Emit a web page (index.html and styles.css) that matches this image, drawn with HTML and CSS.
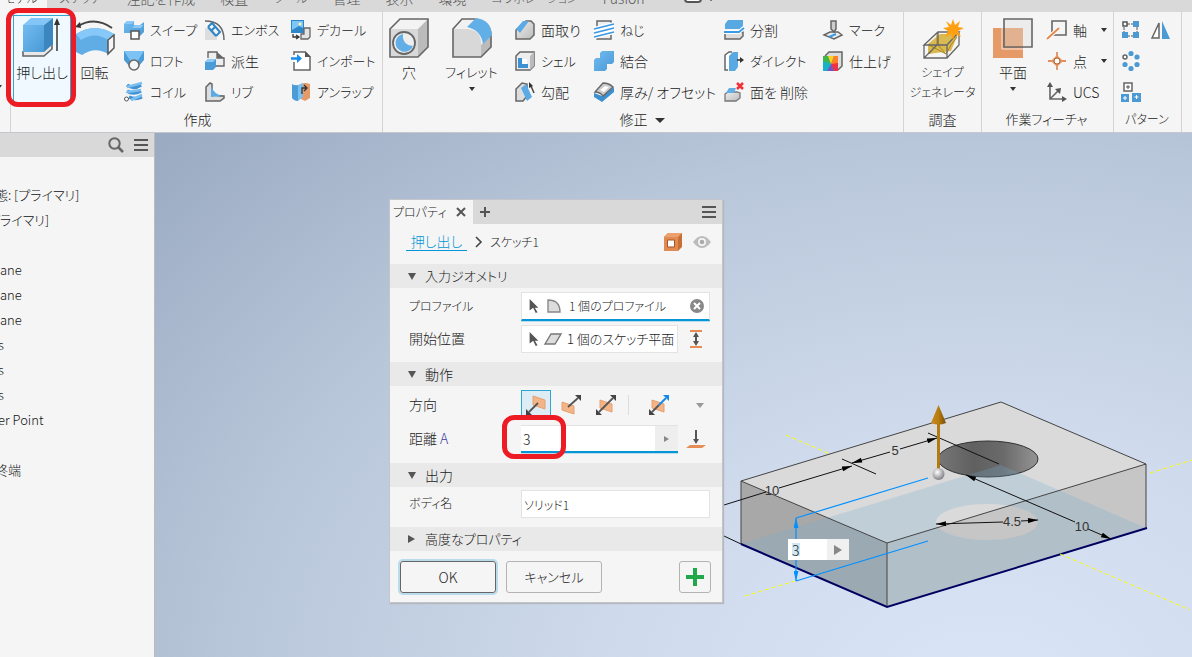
FILE: index.html
```
<!DOCTYPE html>
<html lang="ja">
<head>
<meta charset="utf-8">
<title>押し出し</title>
<link rel="stylesheet" href="styles.css">
</head>
<body>
<svg class="defs" aria-hidden="true">
  <defs>
    <linearGradient id="blue" x1="0" y1="0" x2="1" y2="1"><stop offset="0" stop-color="#72bbf0"/><stop offset="1" stop-color="#4a9ad6"/></linearGradient>
    <linearGradient id="grey" x1="0" y1="0" x2="1" y2="1"><stop offset="0" stop-color="#eee"/><stop offset="1" stop-color="#bbb"/></linearGradient>
    <linearGradient id="hole" x1="0" y1="0" x2="1" y2="0"><stop offset="0" stop-color="#777"/><stop offset=".35" stop-color="#606060"/><stop offset=".65" stop-color="#6a6a6a"/><stop offset="1" stop-color="#949494"/></linearGradient>
    <linearGradient id="gold" x1="0" y1="0" x2="1" y2="0"><stop offset="0" stop-color="#c98a1c"/><stop offset=".5" stop-color="#b87c10"/><stop offset="1" stop-color="#7a4d00"/></linearGradient>
    <radialGradient id="ball" cx=".4" cy=".35" r=".7"><stop offset="0" stop-color="#fff"/><stop offset="1" stop-color="#77777c"/></radialGradient>
    <marker id="tip" viewBox="0 0 12 6" refX="12" refY="3" markerWidth="12" markerHeight="5" markerUnits="userSpaceOnUse" orient="auto-start-reverse"><path d="M0 0 12 3 0 6z" fill="#000"/></marker>
    <marker id="tip-blue" viewBox="0 0 12 6" refX="12" refY="3" markerWidth="12" markerHeight="5" markerUnits="userSpaceOnUse" orient="auto-start-reverse"><path d="M0 0 12 3 0 6z" fill="#0090ff"/></marker>
  </defs>
</svg>
<div class="app">
  <nav class="tabs">
    <button class="tab tab-active narrow">モデル</button>
    <button class="tab narrow">スケッチ</button>
    <button class="tab">注記を作成</button>
    <button class="tab">検査</button>
    <button class="tab narrow">ツール</button>
    <button class="tab">管理</button>
    <button class="tab">表示</button>
    <button class="tab">環境</button>
    <button class="tab narrow">コラボレーション</button>
    <button class="tab">Fusion</button>
    <button class="tab tab-icon" aria-label="表示切替"><svg width="32" height="20" viewBox="0 0 32 20"><rect x="1" y="0" width="16" height="13" rx="3" fill="#fff" stroke="#555" stroke-width="2"/><path d="M5 10h8L9 6z" fill="#333"/><path d="M23 8h8l-4 4z" fill="#222"/></svg></button>
  </nav>

  <div class="ribbon">
    <div class="ribbon-edge"><span class="caret"></span></div>

    <section class="group group-create">
      <div class="group-body">
        <button class="big big-selected">
          <svg width="40" height="40" viewBox="0 0 40 40"><path d="M1 33v5h21l8-7v-5" fill="#e8e8e8" stroke="#666" stroke-width="1.600"/><path d="M1 7h21v27H1z" fill="url(#blue)"/><path d="M1 7 9 0h22l-9 7z" fill="#83c5f7"/><path d="M22 7l9-7v26l-9 8z" fill="#3c86bf"/><path d="M35 33V5" stroke="#333" stroke-width="1.500"/><path d="M35 0l-3 7h6z" fill="#333"/></svg>
          <span>押し出し</span>
          <i class="callout callout-tool"></i>
        </button>
        <button class="big big-revolve">
          <svg width="40" height="40" viewBox="0 0 40 40"><path d="M1 16Q20 4 39 16L33 36Q20 28 7 37L1 34z" fill="#60ade6"/><path d="M1 16Q20 4 39 16L33 22Q20 13 6 22z" fill="#86c8f8"/><path d="M33 22l6-5v13l-6 6z" fill="#f5f5f5" stroke="#555" stroke-width="1.500"/><path d="M3 8Q20-2 37 10" fill="none" stroke="#444" stroke-width="2"/><path d="M0 9 5 4l1 6z" fill="#333"/></svg>
          <span>回転</span>
        </button>
        <div class="col col-create-a">
          <button class="tool"><svg width="20" height="20" viewBox="0 0 20 20"><path d="M0 4 3 1h7v4h6l4-3v10l-4 4H7v-3H0z" fill="url(#blue)"/><path d="M0 4 3 1h7L8 4zM8 8l3-3h8l-2 3z" fill="#8bcaf8"/><rect x="7" y="11" width="8" height="8" fill="#fff" stroke="#555" stroke-width="1.500"/></svg><span class="kana">スイープ</span></button>
          <button class="tool"><svg width="20" height="20" viewBox="0 0 20 20"><path d="M0 0h20v9l-6 7H6L0 9z" fill="#4b9bd7"/><path d="M0 0h20l-7 11H7z" fill="#7cc2f4"/><circle cx="10" cy="14" r="5" fill="#f5f5f5" stroke="#666" stroke-width="1.500"/></svg><span class="kana">ロフト</span></button>
          <button class="tool"><svg width="20" height="20" viewBox="0 0 20 20"><path d="M3 3q6 5 14 0M3 9q6 4 14 0M5 15q6 3 13 0" fill="none" stroke="#4292d0" stroke-width="3.500"/><path d="M18 1 3 5M17 8 3 10M18 13 7 18" stroke="#7abff1" stroke-width="2.500"/><circle cx="2.500" cy="17" r="2" fill="#fff" stroke="#555"/></svg><span class="kana">コイル</span></button>
        </div>
        <div class="col col-create-b">
          <button class="tool"><svg width="20" height="20" viewBox="0 0 20 20"><path d="M0 8q12 0 12 12H0z" fill="#ddd"/><path d="M0 1q19 0 19 19" fill="none" stroke="#666" stroke-width="1.500"/><path d="M3 7l4-4 8 9-4 4M7 10l3-3M3 7l8 9" fill="none" stroke="#2d86c8" stroke-width="2"/></svg><span class="kana">エンボス</span></button>
          <button class="tool"><svg width="20" height="20" viewBox="0 0 20 20"><path d="M3 7V1h9v6h7v8h-8" fill="#eee" stroke="#666" stroke-width="1.400"/><path d="M12 1v6h7z" fill="#666"/><path d="M0 11l3-3h8v8l-3 3H0z" fill="#4b9bd7"/><path d="M0 11l3-3h8l-3 3z" fill="#8bcaf8"/></svg><span>派生</span></button>
          <button class="tool"><svg width="20" height="20" viewBox="0 0 20 20"><path d="M1 19V5l4-4 2 1v10q4 2 12 2v2l-4 3z" fill="#ddd" stroke="#666" stroke-width="1.500"/><path d="M6 4q3 8 11 10L6 15z" fill="#5aaae5"/></svg><span class="kana">リブ</span></button>
        </div>
        <div class="col col-create-c">
          <button class="tool"><svg width="20" height="20" viewBox="0 0 20 20"><path d="M0 0h13v13H0z" fill="#2d86c8"/><path d="M1 1h11v7L8 6 1 10z" fill="#7cc6f8"/><circle cx="9" cy="4" r="1.500" fill="#fff79a"/><path d="M13 8h6v9l-2 2h-7v-5h3z" fill="#e3e3e3" stroke="#666" stroke-width="1.300"/><path d="M2 14v3h5M5 15l3 2-3 2" fill="none" stroke="#333" stroke-width="1.300"/></svg><span class="kana">デカール</span></button>
          <button class="tool"><svg width="20" height="20" viewBox="0 0 20 20"><path d="M3 4V1h11l5 5v13H3v-8" fill="#fff" stroke="#666" stroke-width="1.500"/><path d="M14 0v6h6z" fill="#555"/><path d="M0 7.500h7" stroke="#1b8ce8" stroke-width="2.500"/><path d="M6 3l5 4.500L6 12z" fill="#1b8ce8"/></svg><span class="kana">インポート</span></button>
          <button class="tool"><svg width="20" height="20" viewBox="0 0 20 20"><path d="M10 2q4-2 9 0v14l-5 3-4-2z" fill="#e59a68"/><path d="M1 2q3 2 6 1v16q-4 0-6-3z" fill="#4b9bd7"/><path d="M7 3l5-2v14l-5 4z" fill="#78bff1"/><path d="M11 12V6h5M13 3l3 3-3 3" fill="none" stroke="#333" stroke-width="1.300"/></svg><span class="kana">アンラップ</span></button>
        </div>
      </div>
      <h2 class="group-title">作成</h2>
    </section>

    <section class="group group-modify">
      <div class="group-body">
        <button class="big big-hole">
          <svg width="40" height="40" viewBox="0 0 40 40"><path d="M1 11 11 1h28v28L29 39H1z" fill="#f3f3f3"/><path d="M1 11h28v28H1z" fill="#d9d9d9"/><path d="M29 11 39 1v28L29 39z" fill="#bbb"/><path d="M1 11 11 1h28v28L29 39H1z" fill="none" stroke="#666" stroke-width="1.600"/><circle cx="15" cy="25" r="11" fill="#eee" stroke="#666" stroke-width="1.800"/><path d="M14 16a9 9 0 1 0 10 12Q13 27 14 16z" fill="#62aee6"/></svg>
          <span>穴</span>
        </button>
        <button class="big big-fillet">
          <svg width="40" height="40" viewBox="0 0 40 40"><path d="M1 11 10 1h12q17 2 17 17v11L29 39H1z" fill="#f1f1f1"/><path d="M1 11h14q14 1 14 14v14H1z" fill="#d8d8d8"/><path d="M29 27l10-10v12L29 39z" fill="#bbb"/><path d="M1 11 10 1h12q17 2 17 17v11L29 39H1z" fill="none" stroke="#666" stroke-width="1.600"/><path d="M15 9 24 0q15 2 16 17l-9 9Q29 12 15 9z" fill="#62aee6"/></svg>
          <span class="kana">フィレット</span>
          <span class="caret"></span>
        </button>
        <div class="col col-modify-a">
          <button class="tool"><svg width="20" height="20" viewBox="0 0 20 20"><path d="M1 10 11 1h5l3 3v11l-4 4H1z" fill="url(#grey)" stroke="#666" stroke-width="1.500"/><path d="M1 9 8 1h6L5 13z" fill="#5aaae5"/></svg><span>面取り</span></button>
          <button class="tool"><svg width="20" height="20" viewBox="0 0 20 20"><path d="M1 5l4-4h14v14l-4 4H1z" fill="#eee" stroke="#666" stroke-width="1.500"/><path d="M15 5l4-4v14l-4 4z" fill="#bbb"/><path d="M4 8h8v8H4z" fill="#fff"/><path d="M3 7h4v6h6v4H3z" fill="#3c91d2"/></svg><span class="kana">シェル</span></button>
          <button class="tool"><svg width="20" height="20" viewBox="0 0 20 20"><path d="M1 19V7l6-6 5 1v12l-4 5z" fill="#ddd" stroke="#666" stroke-width="1.500"/><path d="M6 6l5-4 6 13-5 4z" fill="#5aaae5"/><path d="M19 11 16 4" stroke="#444" stroke-width="1.500"/><path d="M14 0l4 4-4 2z" fill="#333"/></svg><span>勾配</span></button>
        </div>
        <div class="col col-modify-b">
          <button class="tool"><svg width="20" height="20" viewBox="0 0 20 20"><path d="M3 1h14v18H3z" fill="#eee" stroke="#666" stroke-width="1.500"/><path d="M0 9 20 4M0 13 20 8M0 17l20-5" stroke="#fff" stroke-width="4"/><path d="M0 9 20 4M0 13 20 8M0 17l20-5" stroke="#3a98e3" stroke-width="1.800"/></svg><span class="kana">ねじ</span></button>
          <button class="tool"><svg width="20" height="20" viewBox="0 0 20 20"><path d="M0 9l2-2h4V2l2-2h12v11l-2 2h-5v5l-2 2H0z" fill="url(#blue)"/></svg><span>結合</span></button>
          <button class="tool"><svg width="20" height="20" viewBox="0 0 20 20"><path d="M0 11v4l8 5 12-10V5L8 14z" fill="#3c8fd0"/><path d="M1 10 9 1q6 0 10 4L9 14q-3-4-8-4z" fill="#ccc" stroke="#666" stroke-width="1.300"/><path d="M6 8l5-4 4 1-5 5z" fill="#fff"/></svg><span>厚み/ オフセット</span></button>
        </div>
        <div class="col col-modify-c">
          <button class="tool"><svg width="20" height="20" viewBox="0 0 20 20"><path d="M1 12h18v4l-3 3H1z" fill="#ddd" stroke="#666" stroke-width="1.500"/><path d="M1 4l3-4h15v6l-3 3H1z" fill="#58a8e2"/><path d="M0 12h15l5-4" fill="none" stroke="#fff" stroke-width="4"/><path d="M0 12h15l5-4" fill="none" stroke="#399be8" stroke-width="1.800"/></svg><span>分割</span></button>
          <button class="tool"><svg width="20" height="20" viewBox="0 0 20 20"><path d="M4 19H1V4l4-3h3" fill="#fff" stroke="#666" stroke-width="1.500"/><path d="M5 5l4-4h5v15l-3 4H5z" fill="#58a8e2"/><path d="M13 9h4" stroke="#333" stroke-width="1.500"/><path d="M16 6l4 3-4 3z" fill="#333"/></svg><span class="kana">ダイレクト</span></button>
          <button class="tool"><svg width="20" height="20" viewBox="0 0 20 20"><path d="M1 12l3-2h9l3 1v5l-4 3H1z" fill="url(#grey)" stroke="#777" stroke-width="1.300"/><path d="M2 11 5 6h7l-2 5z" fill="#62aee6"/><path d="M13 1l6 6M19 1l-6 6" stroke="#f2303a" stroke-width="2.500"/></svg><span>面を 削除</span></button>
        </div>
        <div class="col col-modify-d">
          <button class="tool"><svg width="20" height="20" viewBox="0 0 20 20"><path d="M1 15l6-3h8l4 3-8 4z" fill="#eee" stroke="#666" stroke-width="1.500"/><path d="M8 1h5v8l-2 3-3-3z" fill="#ccc" stroke="#666" stroke-width="1.500"/><path d="M6 17l7-3" stroke="#399be8" stroke-width="2"/></svg><span class="kana">マーク</span></button>
          <button class="tool"><svg width="20" height="20" viewBox="0 0 20 20"><path d="M2 5 6 1h13v14l-4 4" fill="#ddd" stroke="#666" stroke-width="1.500"/><path d="M0 5h15v15H0z" fill="#18b2c7"/><path d="M0 5h5l3 8-8-3z" fill="#43b44c"/><path d="M5 5h6l-3 8z" fill="#ffd21e"/><path d="M11 5h4v9l-7-1z" fill="#ff8126"/><path d="M15 12v8h-4l-3-7z" fill="#ef3045"/><path d="M11 20H4l4-7z" fill="#7751c6"/></svg><span>仕上げ</span></button>
        </div>
      </div>
      <h2 class="group-title">修正 <span class="caret caret-wide"></span></h2>
    </section>

    <section class="group group-study">
      <div class="group-body">
        <button class="big big-shape">
          <svg width="40" height="40" viewBox="0 0 40 40"><path d="M5 26 17 16h18l-7 17-23 3z" fill="#d9b950"/><path d="M6 36l8-10 9 10 5-9 6-8M14 26V16M6 27l17 9" fill="none" stroke="#a98720"/><path d="M1 27 15 14h21L24 27zv13h23V27M24 40l12-13V14M15 14v12L1 40M1 27v13h23" fill="none" stroke="#666" stroke-width="1.300"/><path d="M30 1l2 6 5-4-2 6 6 1-6 3 3 6-6-3-2 6-2-6-6 3 3-6-5-3 6-1-3-6 5 4z" fill="#ffa012"/></svg>
          <span class="narrow">シェイプ</span>
          <span class="narrow">ジェネレータ</span>
        </button>
      </div>
      <h2 class="group-title">調査</h2>
    </section>

    <section class="group group-work">
      <div class="group-body">
        <button class="big big-plane">
          <svg width="40" height="40" viewBox="0 0 40 40"><path d="M0 10h30v30H0z" fill="#e59a68"/><path d="M11 1h28v28H11z" fill="#ddd" fill-opacity=".35"/><path d="M9 10v21h21" fill="none" stroke="#f8e6da"/><path d="M11 1h28v28H11z" fill="none" stroke="#666" stroke-width="1.600"/></svg>
          <span>平面</span>
          <span class="caret"></span>
        </button>
        <div class="col col-work">
          <button class="tool"><svg width="20" height="20" viewBox="0 0 20 20"><path d="M5 1h14v14H5z" fill="none" stroke="#666" stroke-width="1.600"/><path d="M0 19 12 8" stroke="#fff" stroke-width="4"/><path d="M0 19 12 8" stroke="#e8894c" stroke-width="2"/></svg><span>軸</span><span class="caret caret-end"></span></button>
          <button class="tool"><svg width="20" height="20" viewBox="0 0 20 20"><path d="M10 1v18M1 10h18" stroke="#e09060" stroke-width="1.800"/><path d="M10 4l6 6-6 6-6-6z" fill="#e8955e"/><circle cx="10" cy="10" r="3" fill="#fff" stroke="#a96030"/></svg><span>点</span><span class="caret caret-end"></span></button>
          <button class="tool"><svg width="20" height="20" viewBox="0 0 20 20"><path d="M3 3v14h14M3 17 12 8" fill="none" stroke="#666" stroke-width="1.600"/><path d="M0 5l3-5 3 5zM15 14l5 3-5 3zM8 7l6-1-1 6z" fill="#555"/></svg><span>UCS</span></button>
        </div>
      </div>
      <h2 class="group-title kana">作業フィーチャ</h2>
    </section>

    <section class="group group-pattern">
      <div class="group-body">
        <div class="col col-icons">
          <button class="tool" aria-label="矩形状パターン"><svg width="20" height="20" viewBox="0 0 20 20"><path d="M6 4h6M3 7v6M6 16h6M16 7v6" stroke="#555" stroke-dasharray="3 1"/><path d="M2 2h4v4H2z" fill="#fff" stroke="#555" stroke-width="1.500"/><path d="M12 1h6v6h-6zM1 12h6v6H1zM12 12h6v6h-6z" fill="#4c9ad4"/></svg></button>
          <button class="tool" aria-label="円形状パターン"><svg width="20" height="20" viewBox="0 0 20 20"><g fill="#4c9ad4"><circle cx="10" cy="2.500" r="2.600"/><circle cx="16" cy="6" r="2.600"/><circle cx="16" cy="13.500" r="2.600"/><circle cx="10" cy="17.500" r="2.600"/><circle cx="4" cy="13.500" r="2.600"/></g><circle cx="4" cy="6" r="2" fill="#fff" stroke="#666" stroke-width="1.500"/></svg></button>
          <button class="tool" aria-label="スケッチ駆動パターン"><svg width="20" height="20" viewBox="0 0 20 20"><path d="M3 1h8v8H3z" fill="#fff" stroke="#666" stroke-width="1.500"/><path d="M0 12h8v8H0zM11 11h9v9h-9z" fill="#4c9ad4"/><path d="M7 3v4M5 5h4" stroke="#555"/><path d="M4 14v4M2 16h4M15.500 13v4M13.500 15h4" stroke="#fff"/></svg></button>
        </div>
        <div class="col col-icons">
          <button class="tool" aria-label="ミラー"><svg width="20" height="20" viewBox="0 0 20 20"><path d="M8 3v15H1z" fill="#fff" stroke="#666" stroke-width="1.500"/><path d="M11 1l8 18h-8z" fill="#4c9ad4"/></svg></button>
        </div>
      </div>
      <h2 class="group-title narrow">パターン</h2>
    </section>
  </div>

  <main class="workspace">
    <aside class="browser">
      <header class="browser-head">
        <button class="icon-button" aria-label="検索"><svg width="16" height="16" viewBox="0 0 16 16"><circle cx="6.500" cy="6.500" r="5.200" fill="none" stroke="#666" stroke-width="2"/><path d="M10 10l5 5" stroke="#666" stroke-width="2.500"/></svg></button>
        <button class="icon-button" aria-label="メニュー"><svg width="14" height="14" viewBox="0 0 14 14"><path d="M0 2h14M0 7h14M0 12h14" stroke="#555" stroke-width="2"/></svg></button>
      </header>
      <ul class="tree">
        <li class="cut">態: [プライマリ]</li>
        <li class="cut-deep">プライマリ]</li>
        <li></li>
        <li>ane</li>
        <li>ane</li>
        <li>ane</li>
        <li class="cut-latin">s</li>
        <li class="cut-latin">s</li>
        <li class="cut-latin">s</li>
        <li class="cut-latin">er Point</li>
        <li></li>
        <li class="cut">終端</li>
      </ul>
    </aside>

    <div class="viewport">
      <svg class="scene" width="1037" height="524" viewBox="155 133 1037 524" role="img" aria-label="押し出しプレビュー">
        <path d="M741 481 1001 402 1146 464 887 543z" fill="#dadada"/>
        <path d="M741 481 887 543v64L741 544z" fill="#a8a8a8"/>
        <path d="M887 543 1146 464v64L887 607z" fill="#c6c6c6"/>
        <ellipse cx="988" cy="459" rx="50" ry="18" fill="url(#hole)" stroke="#333"/>
        <path fill-rule="evenodd" d="M741 544 1001 465 1146 528 887 607zM936 522a51 18 0 1 0 102 0a51 18 0 1 0-102 0z" fill="#74abd2" fill-opacity=".25"/>
        <path d="M741 544V481L1001 402 1146 464 887 543 741 481M887 543v64M1146 464v64" fill="none" stroke="#444"/>
        <path d="M741 544 887 607 1147 528" fill="none" stroke="#000060" stroke-width="2"/>
        <path d="M786 435 830 454M745 596 795 581M1150 473 1192 460M1060 554 1190 610" stroke="#ff0" stroke-dasharray="4 3"/>
        <g stroke="#111" fill="none">
          <path d="M724 505 766 492M779 488 852 466" marker-end="url(#tip)"/>
          <path d="M842 459 876 474M928 433 999 464M724 536 741 544"/>
          <path d="M890 452 852 463" marker-end="url(#tip)"/>
          <path d="M900 449 937 438" marker-end="url(#tip)"/>
          <path d="M1075 522 966 475" marker-end="url(#tip)"/>
          <path d="M1088 529 1111 539" marker-end="url(#tip)"/>
          <path d="M1003 522 936 524" marker-end="url(#tip)"/>
          <path d="M1021 521 1038 520" marker-end="url(#tip)"/>
        </g>
        <g class="dimension">
          <text x="772" y="495">10</text><text x="895" y="455">5</text><text x="1082" y="531">10</text><text x="1012" y="526">4.5</text>
        </g>
        <g stroke="#0090ff" fill="none" stroke-width="1.200">
          <path d="M928 478 796 518M796 581 928 541"/>
          <path d="M796 518v63" marker-start="url(#tip-blue)" marker-end="url(#tip-blue)"/>
        </g>
        <path d="M937 422h3v48h-3z" fill="#b27a12"/>
        <path d="M938.500 405 946 423q-7 3-15 0z" fill="url(#gold)"/>
        <circle cx="938.500" cy="474" r="6" fill="url(#ball)"/>
      </svg>

      <div class="hud">
        <input class="hud-value" type="text" value="3" aria-label="距離">
        <button class="hud-more" aria-label="オプション"><span class="arrow-right"></span></button>
      </div>

      <section class="panel" aria-label="プロパティ">
        <header class="panel-tabs">
          <div class="panel-tab"><span>プロパティ</span><button class="icon-button" aria-label="閉じる"><svg width="10" height="10" viewBox="0 0 10 10"><path d="M1 1l8 8M9 1 1 9" stroke="#555" stroke-width="2"/></svg></button></div>
          <button class="icon-button" aria-label="追加"><svg width="10" height="10" viewBox="0 0 10 10"><path d="M5 0v10M0 5h10" stroke="#555" stroke-width="2"/></svg></button>
          <button class="icon-button push" aria-label="メニュー"><svg width="14" height="12" viewBox="0 0 14 12"><path d="M0 1h14M0 6h14M0 11h14" stroke="#555" stroke-width="2"/></svg></button>
        </header>
        <div class="crumbs">
          <a class="crumb-link" href="#">押し出し</a>
          <svg width="7" height="10" viewBox="0 0 7 10"><path d="M1 0l5 5-5 5" fill="none" stroke="#444" stroke-width="1.600"/></svg>
          <span class="crumb-here">スケッチ1</span>
          <button class="icon-button push" aria-label="ソリッド"><svg width="18" height="18" viewBox="0 0 18 18"><path d="M0 4l4-4h14v14l-4 4H0z" fill="#c96f36"/><path d="M0 4l4-4h14l-4 4z" fill="#eba06d"/><path d="M0 4h14v14H0z" fill="#e18b52"/><path d="M3.500 7h7v7h-7z" fill="#fff" stroke="#a75525"/></svg></button>
          <button class="icon-button" aria-label="プレビュー"><svg width="18" height="12" viewBox="0 0 18 12"><path d="M0 6q9-12 18 0-9 12-18 0z" fill="#bbb"/><circle cx="9" cy="6" r="4" fill="#f5f5f5"/><circle cx="9" cy="6" r="2.300" fill="#aaa"/></svg></button>
        </div>

        <h3 class="section-head kana"><span class="arrow-down"></span>入力ジオメトリ</h3>
        <div class="section-body">
          <div class="field">
            <span class="field-label narrow">プロファイル</span>
            <div class="picker picker-active">
              <button class="picker-main"><svg width="10" height="14" viewBox="0 0 10 16"><path d="M0 0l10 10H6l3 5-2 1-3-6-4 3z" fill="#555"/></svg><svg width="14" height="14" viewBox="0 0 14 14"><path d="M1 13V1q12 0 12 12z" fill="#ddd" stroke="#888" stroke-width="1.400"/></svg><span class="narrow">1 個のプロファイル</span></button>
              <button class="icon-button" aria-label="クリア"><svg width="14" height="14" viewBox="0 0 14 14"><circle cx="7" cy="7" r="7" fill="#888"/><path d="M4 4l6 6M10 4l-6 6" stroke="#fff" stroke-width="2"/></svg></button>
            </div>
          </div>
          <div class="field">
            <span class="field-label">開始位置</span>
            <div class="picker picker-short">
              <button class="picker-main"><svg width="10" height="14" viewBox="0 0 10 16"><path d="M0 0l10 10H6l3 5-2 1-3-6-4 3z" fill="#555"/></svg><svg width="18" height="12" viewBox="0 0 18 12"><path d="M1 11 7 1h10l-6 10z" fill="#ddd" stroke="#777" stroke-width="1.400"/></svg><span class="kana">1 個のスケッチ平面</span></button>
            </div>
            <button class="icon-button field-side" aria-label="範囲"><svg width="14" height="18" viewBox="0 0 14 18"><path d="M1 1h12M1 17h12" stroke="#e68d55" stroke-width="2"/><path d="M7 4v10" stroke="#555" stroke-width="2"/><path d="M4 7l3-5 3 5zM4 11l3 5 3-5z" fill="#555"/></svg></button>
          </div>
        </div>

        <h3 class="section-head"><span class="arrow-down"></span>動作</h3>
        <div class="section-body section-action">
          <div class="field">
            <span class="field-label">方向</span>
            <div class="directions">
              <button class="direction direction-on" aria-label="既定"><svg width="22" height="22" viewBox="0 0 22 22"><path d="M8 2l12 4v9L8 11z" fill="#f3b487" stroke="#e8a070"/><path d="M13 9 4 18" stroke="#555" stroke-width="1.800"/><path d="M1 21v-6l6 6z" fill="#444"/></svg></button>
              <button class="direction" aria-label="反転"><svg width="22" height="22" viewBox="0 0 22 22"><path d="M2 8l12 4v8L2 16z" fill="#f3b487" stroke="#e8a070"/><path d="M8 13 18 4" stroke="#555" stroke-width="1.800"/><path d="M21 1v6l-6-6z" fill="#444"/></svg></button>
              <button class="direction" aria-label="対称"><svg width="22" height="22" viewBox="0 0 22 22"><path d="M5 6l12 4v8L5 14z" fill="#f3b487" stroke="#e8a070"/><path d="M4 18 18 4" stroke="#555" stroke-width="1.800"/><path d="M21 1v6l-6-6zM1 21v-6l6 6z" fill="#444"/></svg></button>
              <button class="direction direction-last" aria-label="非対称"><svg width="22" height="22" viewBox="0 0 22 22"><path d="M4 6l12 4v8L4 14z" fill="#f3b487" stroke="#e8a070"/><path d="M4 18l7-7" stroke="#555" stroke-width="1.800"/><path d="M11 11l7-7" stroke="#1689e8" stroke-width="2"/><path d="M21 1v6l-6-6z" fill="#1689e8"/><path d="M1 21v-6l6 6z" fill="#444"/></svg></button>
            </div>
            <button class="icon-button dir-more" aria-label="その他"><span class="caret caret-dim"></span></button>
          </div>
          <div class="field">
            <label class="field-label" for="distance">距離 <span class="accent">A</span></label>
            <div class="distance">
              <input id="distance" type="text" value="3">
              <button class="distance-more" aria-label="オプション"><span class="arrow-right arrow-small"></span></button>
              <i class="callout callout-distance"></i>
            </div>
            <button class="icon-button field-side" aria-label="終端"><svg width="20" height="18" viewBox="0 0 20 18"><path d="M0 18l4-3h16l-4 3z" fill="#e68d55"/><path d="M10 0v12" stroke="#555" stroke-width="2"/><path d="M7 9h6l-3 5z" fill="#555"/></svg></button>
          </div>
        </div>

        <h3 class="section-head"><span class="arrow-down"></span>出力</h3>
        <div class="section-body section-output">
          <div class="field">
            <label class="field-label narrow" for="body-name">ボディ名</label>
            <input class="text-input narrow" id="body-name" type="text" value="ソリッド1">
          </div>
        </div>

        <h3 class="section-head kana"><span class="arrow-right arrow-head"></span>高度なプロパティ</h3>
        <footer class="panel-foot">
          <button class="button button-default">OK</button>
          <button class="button kana">キャンセル</button>
          <button class="button-add push" aria-label="適用"><svg width="20" height="20" viewBox="0 0 20 20"><path d="M10 1v18M1 10h18" stroke="#20a84b" stroke-width="4"/></svg></button>
        </footer>
      </section>
    </div>
  </main>
</div>
</body>
</html>
```
FILE: styles.css
```
* { box-sizing: border-box; }

body {
  margin: 0;
  overflow: hidden;
  font-family: "Noto Sans CJK JP", sans-serif;
  font-size: 14px;
  font-weight: 300;
  line-height: 20px;
  color: #222;
  background: #f5f5f5;
}

button, input {
  font: inherit;
  font-feature-settings: inherit;
  color: inherit;
  margin: 0;
  padding: 0;
  border: 0;
  background: none;
}

.app { font-feature-settings: "palt"; display: flex; flex-direction: column; height: 100vh; }
.defs { position: absolute; width: 0; height: 0; }
svg { display: block; flex: none; overflow: visible; }
h2, h3, ul { margin: 0; padding: 0; font-size: inherit; font-weight: inherit; }
.kana { font-size: 13px; }
.narrow { font-size: 12px; }
.push { margin-left: auto; }

/* Tab strip */
.tabs { display: flex; align-items: flex-end; height: 12px; flex: none; overflow: hidden; background: #d9d9d9; color: #555; }
.tab { flex: none; height: 24px; padding: 0 13px 4px 12px; white-space: nowrap; }
.tab-active { width: 47px; padding: 0 0 4px 4px; background: #f5f5f5; color: #333; text-align: left; }
.tab-icon { padding: 0 26px 2px; }

/* Ribbon */
.ribbon { display: flex; flex: none; height: 121px; border-bottom: 1px solid #c4c8cd; background: #f5f5f5; }
.ribbon-edge { width: 10px; padding-top: 73px; }
.ribbon-edge .caret { margin-left: -4px; }
.group { display: flex; flex-direction: column; flex: none; border-left: 1px solid #d4d4d4; padding-top: 2px; }
.group-create { width: 372px; padding-left: 2px; }
.group-modify { width: 521px; padding-left: 6px; }
.group-study { width: 78px; }
.group-work { width: 132px; padding-left: 6px; }
.group-pattern { width: 69px; padding-left: 7px; border-right: 1px solid #d4d4d4; }
.group-body { display: flex; height: 94px; }
.group-title { line-height: 22px; text-align: center; }
.group-modify .group-title { padding-right: 8px; }
.group-work .group-title, .group-pattern .group-title { padding-right: 8px; }

.big { position: relative; display: flex; flex-direction: column; align-items: center; flex: none; height: 89px; padding-top: 4px; white-space: nowrap; }
.big svg { margin-bottom: 4px; }
.big .caret { margin-top: 5px; }
.big-selected { width: 58px; height: 88px; margin-top: 1px; padding-top: 2px; border: 1px solid #2fa5d2; background: #eff9ff; }
.big-revolve { width: 47px; margin-right: 6px; }
.big-hole { width: 40px; }
.big-fillet { width: 57px; margin: 0 15px 0 14px; }
.big-shape { width: 77px; }
.big-plane { width: 50px; margin-right: 9px; }

.col { flex: none; }
.col-create-a { width: 81px; }
.col-create-b { width: 86px; }
.col-create-c { width: 88px; }
.col-modify-a { width: 79px; }
.col-modify-b { width: 130px; }
.col-modify-c { width: 99px; }
.col-modify-d { width: 76px; }
.col-work { width: 60px; }
.col-icons { width: 30px; }
.tool { display: flex; align-items: center; gap: 6px; width: 100%; height: 31px; white-space: nowrap; text-align: left; }
.caret-end { margin-left: auto; }

.caret { display: block; width: 0; height: 0; border: 3px solid transparent; border-top: 4px solid #333; border-bottom: 0; }
.caret-wide { display: inline-block; margin-left: 4px; border-width: 5px 5px 0; vertical-align: 2px; }
.caret-dim { border-width: 5px 4px 0; border-top-color: #999; }
.arrow-down { margin-right: 1px; border: 4px solid transparent; border-top: 7px solid #555; border-bottom: 0; }
.arrow-right { display: block; border: 5px solid transparent; border-left: 8px solid #888; border-right: 0; }
.arrow-small { border-width: 3px 0 3px 5px; }
.arrow-head { border-width: 4px 0 4px 7px; border-left-color: #555; margin-right: 2px; }

.callout { position: absolute; z-index: 2; border: 5px solid #ed1c24; border-radius: 12px; pointer-events: none; }
.callout-tool { inset: -8px -6px -5px -8px; }
.callout-distance { left: -19px; top: -11px; width: 64px; height: 44px; }

/* Workspace */
.workspace { display: flex; flex: 1; min-height: 0; }
.browser { width: 155px; flex: none; border-right: 1px solid #bbb; overflow: hidden; color: #111; }
.browser-head { display: flex; align-items: center; justify-content: flex-end; gap: 10px; height: 24px; padding-right: 6px; background: #d9d9d9; }
.icon-button { display: flex; align-items: center; justify-content: center; flex: none; }
.icon-button.push { margin-left: auto; }
.tree { padding-top: 25px; list-style: none; font-size: 13px; }
.tree li { height: 25px; line-height: 25px; white-space: nowrap; }
.tree .cut { margin-left: -5px; }
.tree .cut-deep { margin-left: -12px; }
.tree .cut-latin { margin-left: -2px; }

.viewport { position: relative; flex: 1; min-width: 0; overflow: hidden; background: radial-gradient(ellipse 1150px 850px at 80% 108%, #dae6f8 0%, #cfdbed 32%, #b9c7da 65%, #98a8bf 100%); }
.scene { position: absolute; left: 0; top: 0; }
.dimension { font-family: "Liberation Sans", sans-serif; font-size: 13px; text-anchor: middle; fill: #333; }

.hud { position: absolute; left: 633px; top: 406px; display: flex; width: 61px; height: 21px; background: #f0f0f0; }
.hud-value { width: 39px; padding-left: 4px; background: linear-gradient(#cfe8f4, #cfe8f4) 4px 50% / 8px 13px no-repeat #fff; }
.hud-more { display: flex; flex: 1; align-items: center; justify-content: center; }

/* Property panel */
.panel { position: absolute; left: 235px; top: 67px; width: 332px; background: #f5f5f5; box-shadow: 0 0 0 1px #c2c6cb, 1px 1px 1px 1px #b4b8bd; }
.panel-tabs { display: flex; align-items: center; gap: 7px; height: 24px; padding-right: 6px; background: #d9d9d9; }
.panel-tab { display: flex; align-items: center; justify-content: space-between; width: 83px; height: 24px; padding: 0 7px 0 3px; background: #f5f5f5; font-size: 12px; }
.crumbs { display: flex; align-items: center; height: 40px; padding: 0 11px 5px 16px; }
.crumb-link { width: 61px; margin-right: 8px; border-bottom: 1px solid #0696d7; color: #0696d7; line-height: 18px; text-align: center; text-decoration: none; }
.crumb-here { margin-left: 8px; font-size: 12px; }
.crumbs .icon-button + .icon-button { margin-left: 11px; }
.section-head { display: flex; align-items: center; gap: 8px; height: 24px; padding-left: 18px; background: #e9e9e9; }
.section-body { display: flex; flex-direction: column; gap: 4px; padding: 4px 12px 9px 19px; }
.section-action { gap: 5px; padding-bottom: 10px; }
.section-output { padding: 3px 12px 9px 19px; }
.field { display: flex; align-items: center; }
.field-label { width: 112px; flex: none; line-height: 18px; padding-bottom: 2px; }
.accent { color: #3a3aa8; }
.picker { display: flex; flex: 1; height: 28px; padding-right: 5px; border: 1px solid #e3e3e3; background: #fff; }
.picker-active { height: 29px; border-bottom: 2px solid #0696d7; box-shadow: 0 1px 0 #b9dcec; }
.picker-main { display: flex; flex: 1; align-items: center; gap: 8px; padding-left: 7px; white-space: nowrap; }
.picker-short { flex: none; width: 157px; }
.picker-short .picker-main { gap: 5px; }
.field-side { width: 36px; }
.directions { display: flex; align-items: center; gap: 5px; }
.direction { display: flex; align-items: center; justify-content: center; width: 30px; height: 30px; border: 1px solid transparent; }
.direction-on { border-color: #2fa5d2; background: #dcedf6; }
.direction-last { width: 48px; margin-left: 1px; padding-left: 16px; background: linear-gradient(#ddd, #ddd) 0 50% / 1px 20px no-repeat; }
.dir-more { width: 44px; padding-left: 6px; }
.distance { position: relative; display: flex; flex: none; width: 157px; height: 28px; border-top: 1px solid #e3e3e3; border-bottom: 2px solid #0696d7; box-shadow: 0 1px 0 #b9dcec; }
.distance input { width: 134px; padding-left: 2px; background: #fff; }
.distance-more { display: flex; flex: 1; align-items: center; justify-content: center; background: #eee; }
.text-input { flex: 1; min-width: 0; height: 28px; padding-left: 2px; border: 1px solid #e3e3e3; background: #fff; }
.panel-foot { display: flex; align-items: center; gap: 10px; padding: 10px 11px 9px 10px; }
.button { width: 96px; height: 32px; border: 1px solid #b3b3b3; border-radius: 3px; }
.button-default { border-color: #666; box-shadow: 0 0 0 2px #b9dcec; }
.button-add { display: flex; align-items: center; justify-content: center; width: 32px; height: 32px; border: 1px solid #b3b3b3; border-radius: 3px; }
```
